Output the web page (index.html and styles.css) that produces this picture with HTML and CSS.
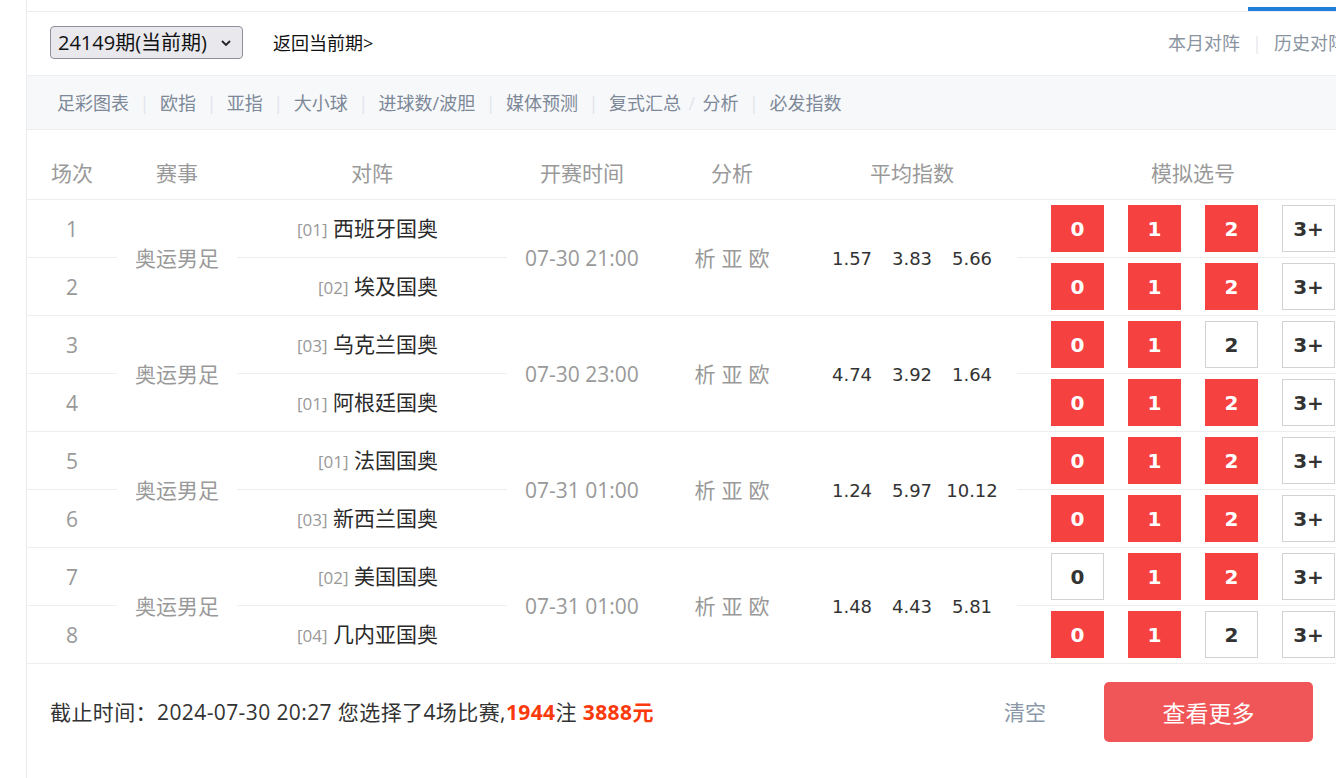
FILE: index.html
```html
<!DOCTYPE html>
<html lang="zh-CN">
<head>
  <meta charset="UTF-8">
  <meta name="viewport" content="width=device-width, initial-scale=1.0">
  <title>足彩模拟选号</title>
  <link rel="stylesheet" href="styles.css">
</head>
<body>

<div class="page">
  <aside class="side"></aside>

  <main class="main">
    <div class="board">
      <div class="top-tabs"><span class="tab-active"></span></div>

      <div class="toolbar">
        <div class="toolbar-left">
          <div class="period-select">
            <span>24149期(当前期)</span>
            <svg width="12" height="8" viewBox="0 0 12 8"><path d="M2 2 L6 6 L10 2" fill="none" stroke="#222" stroke-width="1.8"/></svg>
          </div>
          <a class="back-link" href="#">返回当前期&gt;</a>
        </div>
        <div class="toolbar-right">
          <a href="#">本月对阵</a>
          <span class="sep">|</span>
          <a href="#">历史对阵</a>
        </div>
      </div>

      <nav class="subnav">
        <a href="#">足彩图表</a><span class="sep">|</span>
        <a href="#">欧指</a><span class="sep">|</span>
        <a href="#">亚指</a><span class="sep">|</span>
        <a href="#">大小球</a><span class="sep">|</span>
        <a href="#">进球数/波胆</a><span class="sep">|</span>
        <a href="#">媒体预测</a><span class="sep">|</span>
        <a href="#">复式汇总</a><span class="sep slash">/</span>
        <a href="#">分析</a><span class="sep">|</span>
        <a href="#">必发指数</a>
      </nav>

      <table class="match-table">
        <colgroup>
          <col style="width:90px">
          <col style="width:120px">
          <col style="width:270px">
          <col style="width:150px">
          <col style="width:150px">
          <col style="width:210px">
          <col style="width:352px">
        </colgroup>
        <thead>
          <tr>
            <th>场次</th>
            <th>赛事</th>
            <th>对阵</th>
            <th>开赛时间</th>
            <th>分析</th>
            <th>平均指数</th>
            <th>模拟选号</th>
          </tr>
        </thead>
        <tbody>
          <tr>
            <td class="num">1</td>
            <td class="league" rowspan="2">奥运男足</td>
            <td class="team"><span class="code">[01]</span> 西班牙国奥</td>
            <td class="time" rowspan="2">07-30 21:00</td>
            <td class="links" rowspan="2"><a href="#">析</a><a href="#">亚</a><a href="#">欧</a></td>
            <td class="odds" rowspan="2"><span>1.57</span><span>3.83</span><span>5.66</span></td>
            <td class="picks"><div class="pick-row"><span class="pick on">0</span><span class="pick on">1</span><span class="pick on">2</span><span class="pick">3+</span></div></td>
          </tr>
          <tr>
            <td class="num">2</td>
            <td class="team"><span class="code">[02]</span> 埃及国奥</td>
            <td class="picks"><div class="pick-row"><span class="pick on">0</span><span class="pick on">1</span><span class="pick on">2</span><span class="pick">3+</span></div></td>
          </tr>
          <tr>
            <td class="num">3</td>
            <td class="league" rowspan="2">奥运男足</td>
            <td class="team"><span class="code">[03]</span> 乌克兰国奥</td>
            <td class="time" rowspan="2">07-30 23:00</td>
            <td class="links" rowspan="2"><a href="#">析</a><a href="#">亚</a><a href="#">欧</a></td>
            <td class="odds" rowspan="2"><span>4.74</span><span>3.92</span><span>1.64</span></td>
            <td class="picks"><div class="pick-row"><span class="pick on">0</span><span class="pick on">1</span><span class="pick">2</span><span class="pick">3+</span></div></td>
          </tr>
          <tr>
            <td class="num">4</td>
            <td class="team"><span class="code">[01]</span> 阿根廷国奥</td>
            <td class="picks"><div class="pick-row"><span class="pick on">0</span><span class="pick on">1</span><span class="pick on">2</span><span class="pick">3+</span></div></td>
          </tr>
          <tr>
            <td class="num">5</td>
            <td class="league" rowspan="2">奥运男足</td>
            <td class="team"><span class="code">[01]</span> 法国国奥</td>
            <td class="time" rowspan="2">07-31 01:00</td>
            <td class="links" rowspan="2"><a href="#">析</a><a href="#">亚</a><a href="#">欧</a></td>
            <td class="odds" rowspan="2"><span>1.24</span><span>5.97</span><span>10.12</span></td>
            <td class="picks"><div class="pick-row"><span class="pick on">0</span><span class="pick on">1</span><span class="pick on">2</span><span class="pick">3+</span></div></td>
          </tr>
          <tr>
            <td class="num">6</td>
            <td class="team"><span class="code">[03]</span> 新西兰国奥</td>
            <td class="picks"><div class="pick-row"><span class="pick on">0</span><span class="pick on">1</span><span class="pick on">2</span><span class="pick">3+</span></div></td>
          </tr>
          <tr>
            <td class="num">7</td>
            <td class="league" rowspan="2">奥运男足</td>
            <td class="team"><span class="code">[02]</span> 美国国奥</td>
            <td class="time" rowspan="2">07-31 01:00</td>
            <td class="links" rowspan="2"><a href="#">析</a><a href="#">亚</a><a href="#">欧</a></td>
            <td class="odds" rowspan="2"><span>1.48</span><span>4.43</span><span>5.81</span></td>
            <td class="picks"><div class="pick-row"><span class="pick">0</span><span class="pick on">1</span><span class="pick on">2</span><span class="pick">3+</span></div></td>
          </tr>
          <tr>
            <td class="num">8</td>
            <td class="team"><span class="code">[04]</span> 几内亚国奥</td>
            <td class="picks"><div class="pick-row"><span class="pick on">0</span><span class="pick on">1</span><span class="pick">2</span><span class="pick">3+</span></div></td>
          </tr>
        </tbody>
      </table>
    </div>

    <div class="footer">
      <p class="summary">截止时间：2024-07-30 20:27 您选择了4场比赛,<b>1944</b>注 <b>3888元</b></p>
      <div class="actions">
        <a class="clear-btn" href="#">清空</a>
        <button class="more-btn" type="button">查看更多</button>
      </div>
    </div>
  </main>
</div>

</body>
</html>
```

FILE: styles.css
```css
html, body {
  margin: 0;
  padding: 0;
  height: 100%;
  overflow: hidden;
  background-color: #fff;
}
body {
  font-family: 'Open Sans', 'Noto Sans CJK SC', sans-serif;
  color: #333;
}
a {
  text-decoration: none;
  color: inherit;
}
.page {
  display: flex;
  height: 778px;
}
.side {
  width: 26px;
  flex-shrink: 0;
  border-right: 1px solid #ececec;
}
.main {
  flex: 1;
  min-width: 0;
  overflow: hidden;
}
.board {
  width: 1342px;
}

/* top strip with active tab marker */
.top-tabs {
  height: 11px;
  border-bottom: 1px solid #ececf0;
  display: flex;
  justify-content: flex-end;
}
.tab-active {
  width: 121px;
  height: 4px;
  margin-top: 7px;
  background-color: #1f7fdb;
}

.toolbar {
  height: 63px;
  display: flex;
  align-items: center;
  justify-content: space-between;
  padding: 0 23px;
}
.toolbar-left {
  display: flex;
  align-items: center;
}
.period-select {
  width: 193px;
  height: 33px;
  box-sizing: border-box;
  display: flex;
  align-items: center;
  justify-content: space-between;
  padding: 0 10px 0 7px;
  background-color: #e9e9ed;
  border: 1px solid #8f8f9d;
  border-radius: 4px;
  font-size: 20px;
  line-height: 24px;
  color: #111;
  margin-top: -2px;
}
.back-link {
  margin-left: 30px;
  font-size: 18px;
  line-height: 24px;
  color: #111;
  margin-top: -2px;
}
.toolbar-right {
  display: flex;
  align-items: center;
  font-size: 18px;
  line-height: 24px;
  color: #8a94a1;
  margin-top: -2px;
}
.toolbar-right .sep {
  color: #e6e8eb;
  margin: 0 12px;
}

.subnav {
  height: 53px;
  display: flex;
  align-items: center;
  padding-left: 30px;
  background-color: #f7f8fa;
  border-top: 1px solid #eceef2;
  border-bottom: 1px solid #eceef2;
  font-size: 18px;
  line-height: 24px;
  color: #7d8898;
}
.subnav .sep {
  color: #e2e5ea;
  margin: 0 10.5px;
}
.subnav .slash {
  margin: 0 7.5px;
}

/* match table */
.match-table {
  width: 1342px;
  table-layout: fixed;
  border-collapse: collapse;
}
.match-table th {
  padding: 28px 0 11px;
  font-size: 21px;
  line-height: 30px;
  font-weight: normal;
  color: #999;
  border-bottom: 1px solid #eeeeee;
}
.match-table td {
  height: 57px;
  padding: 0;
  text-align: center;
  vertical-align: middle;
  font-size: 21px;
  line-height: 30px;
  color: #999;
  border-bottom: 1px solid #eeeeee;
}
.match-table td.team {
  text-align: right;
  padding-right: 69px;
  color: #2a2a2a;
}
.team .code {
  font-size: 17px;
  color: #999;
}
.links a {
  margin: 0 3px;
}
.odds span {
  display: inline-block;
  width: 60px;
  font-family: 'DejaVu Sans', sans-serif;
  font-size: 18px;
  color: #333;
}
.pick-row {
  display: flex;
  justify-content: center;
  gap: 24px;
}
.pick {
  width: 53px;
  height: 47px;
  box-sizing: border-box;
  display: flex;
  align-items: center;
  justify-content: center;
  border: 1px solid #d2d2d2;
  background-color: #fff;
  font-family: 'DejaVu Sans', sans-serif;
  font-weight: bold;
  font-size: 20px;
  color: #333;
}
.pick.on {
  background-color: #f64141;
  border-color: #f64141;
  color: #fff;
}

/* footer */
.footer {
  display: flex;
  align-items: center;
  justify-content: space-between;
  padding: 18px 23px 0;
}
.summary {
  margin: 0;
  font-size: 21px;
  line-height: 30px;
  letter-spacing: 0.4px;
  color: #333;
}
.summary b {
  color: #fa3a0c;
}
.actions {
  display: flex;
  align-items: center;
  gap: 58px;
}
.clear-btn {
  font-size: 21px;
  line-height: 30px;
  color: #8a97a8;
}
.more-btn {
  width: 209px;
  height: 60px;
  border: none;
  border-radius: 5px;
  background-color: #f05557;
  color: #fff;
  font-family: 'Noto Sans CJK SC', sans-serif;
  font-size: 23px;
  cursor: pointer;
}
```
